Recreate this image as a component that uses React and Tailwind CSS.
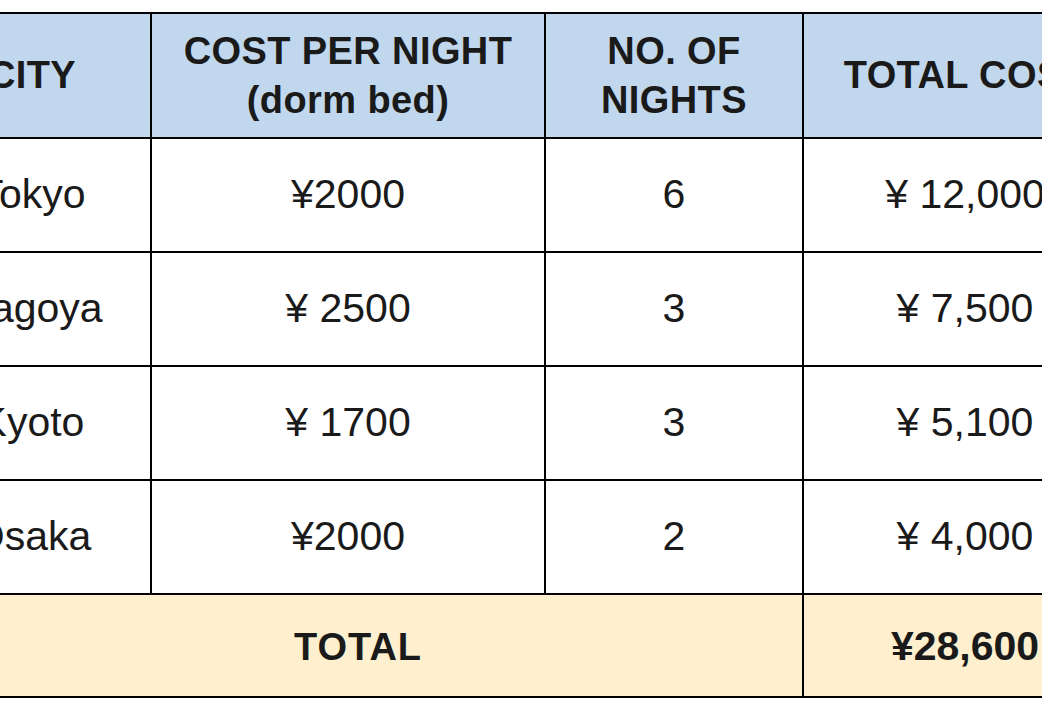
import React from 'react';

const rows = [
  { city: 'Tokyo', cost: '¥2000', nights: '6', total: '¥ 12,000' },
  { city: 'Nagoya', cost: '¥ 2500', nights: '3', total: '¥ 7,500' },
  { city: 'Kyoto', cost: '¥ 1700', nights: '3', total: '¥ 5,100' },
  { city: 'Osaka', cost: '¥2000', nights: '2', total: '¥ 4,000' },
];

const App = () => {
  return (
    <div className="w-[1042px] h-[716px] overflow-hidden bg-white pt-[12px]" style={{ fontFamily: '"Liberation Sans", Arial, sans-serif' }}>
      <table className="-ml-[88px] border-collapse text-[#1a1a1a] table-fixed w-[1214px]">
        <colgroup>
          <col className="w-[238px]" />
          <col className="w-[394px]" />
          <col className="w-[258px]" />
          <col className="w-[324px]" />
        </colgroup>
        <thead>
          {/* Header */}
          <tr className="bg-[#c0d7ed] h-[125px]">
            <th className="border-2 border-black text-[38px] font-bold leading-[49px] tracking-[0.4px]">CITY</th>
            <th className="border-2 border-black text-[38px] font-bold leading-[49px] tracking-[0.4px]">
              COST PER NIGHT<br />(dorm bed)
            </th>
            <th className="border-2 border-black text-[38px] font-bold leading-[49px] tracking-[0.4px]">
              NO. OF<br />NIGHTS
            </th>
            <th className="border-2 border-black text-[38px] font-bold leading-[49px] tracking-[0.4px]">TOTAL COST</th>
          </tr>
        </thead>
        <tbody>
          {rows.map((row) => (
            <tr key={row.city} className="h-[114px]">
              <td className="border-2 border-black text-center text-[41px]">{row.city}</td>
              <td className="border-2 border-black text-center text-[41px]">{row.cost}</td>
              <td className="border-2 border-black text-center text-[41px]">{row.nights}</td>
              <td className="border-2 border-black text-center text-[41px]">{row.total}</td>
            </tr>
          ))}
          {/* Total row */}
          <tr className="bg-[#fef0ce] h-[103px]">
            <td colSpan={3} className="border-2 border-black text-center text-[38px] font-bold tracking-[1px] pt-[3px]">TOTAL</td>
            <td className="border-2 border-black text-center text-[41px] font-bold pt-[3px]">¥28,600</td>
          </tr>
        </tbody>
      </table>
    </div>
  );
};

export default App;
